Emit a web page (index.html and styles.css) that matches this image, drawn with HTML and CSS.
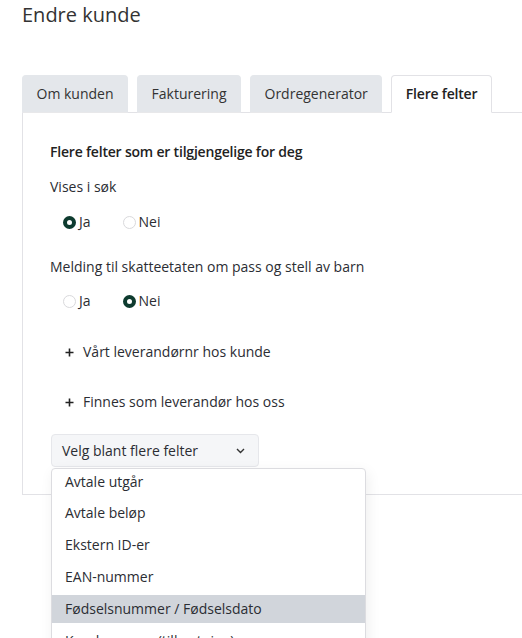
FILE: index.html
```html
<!DOCTYPE html>
<html lang="no">
<head>
    <meta charset="UTF-8">
    <meta name="viewport" content="width=device-width, initial-scale=1.0">
    <title>Endre kunde</title>
    <link rel="stylesheet" href="styles.css">
</head>
<body>
    <div class="page">
        <h1>Endre kunde</h1>

        <div class="tabs">
            <div class="tab">Om kunden</div>
            <div class="tab">Fakturering</div>
            <div class="tab">Ordregenerator</div>
            <div class="tab active">Flere felter</div>
        </div>

        <div class="panel">
            <h2>Flere felter som er tilgjengelige for deg</h2>

            <div class="field-label first">Vises i søk</div>
            <div class="radio-row">
                <label class="radio"><span class="dot checked"></span>Ja</label>
                <label class="radio"><span class="dot"></span>Nei</label>
            </div>

            <div class="field-label">Melding til skatteetaten om pass og stell av barn</div>
            <div class="radio-row">
                <label class="radio"><span class="dot"></span>Ja</label>
                <label class="radio"><span class="dot checked"></span>Nei</label>
            </div>

            <div class="add-field first-add">
                <svg width="9" height="9" viewBox="0 0 9 9"><path d="M4.5 0.5v8M0.5 4.5h8" stroke="#222" stroke-width="1.6"/></svg>
                Vårt leverandørnr hos kunde
            </div>
            <div class="add-field">
                <svg width="9" height="9" viewBox="0 0 9 9"><path d="M4.5 0.5v8M0.5 4.5h8" stroke="#222" stroke-width="1.6"/></svg>
                Finnes som leverandør hos oss
            </div>

            <div class="select-wrap">
                <div class="select">
                    <span>Velg blant flere felter</span>
                    <svg width="9" height="6" viewBox="0 0 9 6"><path d="M1 1l3.5 3.5L8 1" fill="none" stroke="#333" stroke-width="1.4"/></svg>
                </div>
                <ul class="dropdown">
                    <li>Avtale utgår</li>
                    <li>Avtale beløp</li>
                    <li>Ekstern ID-er</li>
                    <li>EAN-nummer</li>
                    <li class="hover">Fødselsnummer / Fødselsdato</li>
                    <li>Kundegruppe (tilknytning)</li>
                </ul>
            </div>
        </div>
    </div>
</body>
</html>
```

FILE: styles.css
```css
html, body {
    min-height: 638px;
}
body {
    margin: 0;
    font-family: "Open Sans", Arial, sans-serif;
    font-size: 14px;
    color: #2b2d33;
    background: #fff;
}
.page {
    padding: 0 0 0 22px;
}
h1 {
    margin: 0;
    padding-top: 1px;
    font-size: 20px;
    font-weight: 400;
    line-height: 28px;
    color: #333;
}

/* Tabs */
.tabs {
    display: flex;
    gap: 9px;
    margin-top: 46px;
    margin-bottom: -1px;
    position: relative;
    z-index: 1;
}
.tab {
    height: 36px;
    line-height: 36px;
    padding: 0 13.5px;
    background: #e4e7eb;
    border: 1px solid #e4e7eb;
    border-bottom-color: #e8e8ea;
    border-radius: 4px 4px 0 0;
    color: #333;
}
.tab.active {
    background: #fff;
    border-color: #e2e2e6;
    border-bottom-color: #fff;
    font-weight: 600;
    letter-spacing: -0.2px;
    color: #222;
}

/* Panel */
.panel {
    border: 1px solid #e2e2e6;
    border-right: none;
    padding: 29px 0 27px 27px;
}
h2 {
    margin: 0;
    font-size: 14px;
    font-weight: 600;
    letter-spacing: -0.2px;
    line-height: 20px;
    color: #222;
}
.field-label {
    line-height: 20px;
    margin-top: 25px;
}
.field-label.first {
    margin-top: 15px;
}
.radio-row {
    display: flex;
    gap: 32px;
    padding-left: 13px;
    margin-top: 14px;
    line-height: 20px;
}
.field-label.first + .radio-row {
    margin-top: 15px;
}
.radio {
    display: flex;
    align-items: center;
    gap: 3px;
}
.dot {
    box-sizing: border-box;
    width: 13px;
    height: 13px;
    border-radius: 50%;
    border: 1px solid #d9d9dc;
    background: #fff;
}
.dot.checked {
    border: 4px solid #0e3b2f;
}

/* Add field links */
.add-field {
    display: flex;
    align-items: center;
    gap: 9px;
    padding-left: 15px;
    line-height: 20px;
    margin-top: 30px;
}
.add-field.first-add {
    margin-top: 31px;
}

/* Select + dropdown */
.select-wrap {
    position: relative;
    margin-top: 22px;
    margin-left: 1px;
    width: 208px;
}
.select {
    box-sizing: border-box;
    height: 33px;
    display: flex;
    align-items: center;
    justify-content: space-between;
    padding: 0 13px 0 10px;
    background: #f5f6f8;
    border: 1px solid #e6e7eb;
    border-radius: 4px;
}
.dropdown {
    position: absolute;
    top: 34px;
    left: 0;
    width: 315px;
    height: 190px;
    overflow: hidden;
    box-sizing: border-box;
    margin: 0;
    padding: 0;
    list-style: none;
    background: #fff;
    border: 1px solid #dcdce0;
    border-radius: 4px;
    box-shadow: 2px 4px 14px rgba(0, 0, 0, 0.07);
    z-index: 5;
}
.dropdown li {
    height: 28px;
    line-height: 28px;
    padding: 0 13px;
    margin-bottom: 4px;
    color: #2b2d33;
}
.dropdown li:first-child {
    height: 26px;
    line-height: 26px;
}
.dropdown li.hover {
    background: #d1d5db;
}
```
